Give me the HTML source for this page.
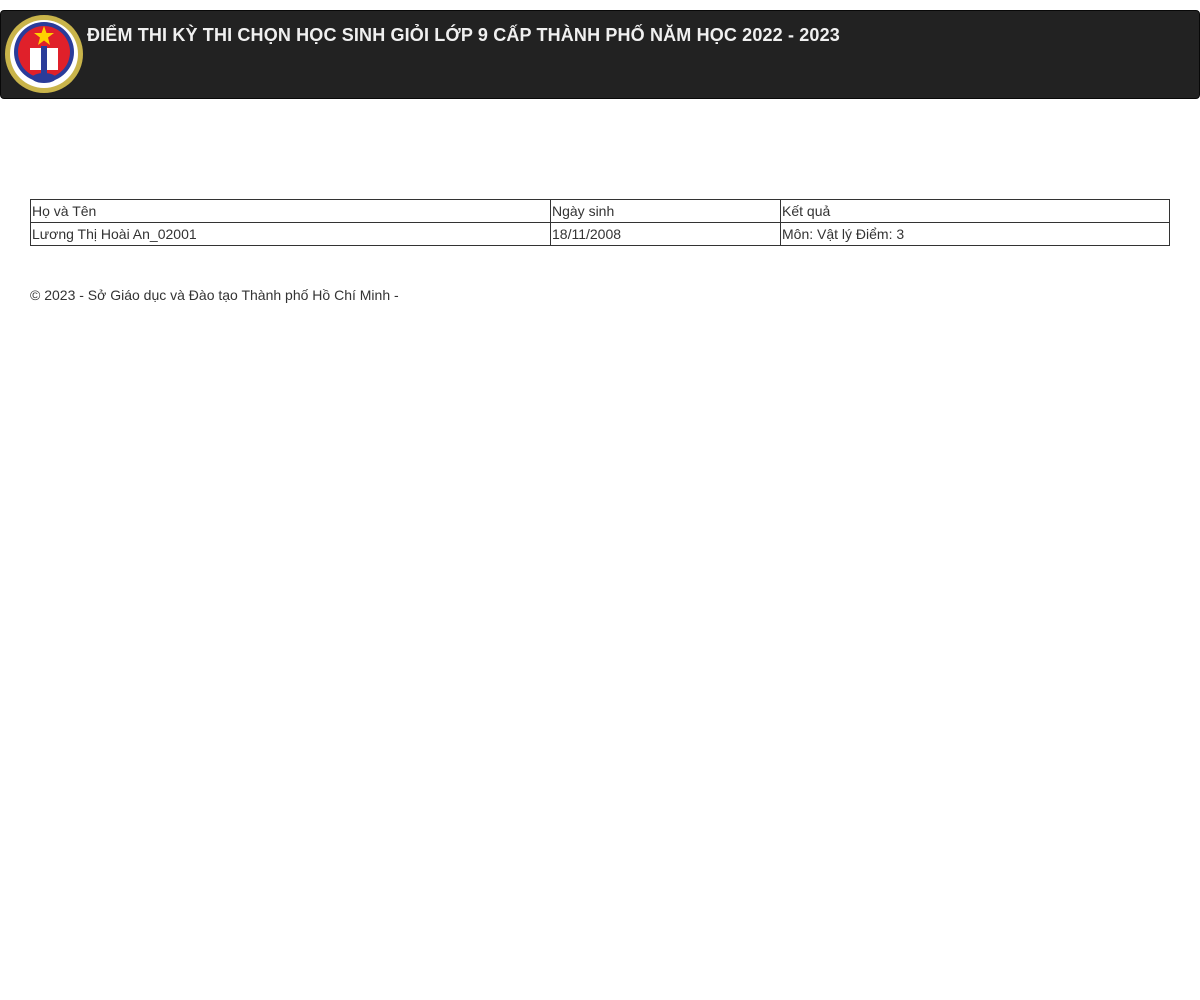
<!DOCTYPE html>
<html><head><meta charset="utf-8"><style>
body{margin:0;background:#fff;font-family:"Liberation Sans",Arial,sans-serif;color:#333;font-size:14px}
.hdr{position:absolute;left:0;top:10px;width:1198px;height:87px;background:#222;border:1px solid #080808;border-radius:4px}
.hdr h1{position:absolute;left:86px;top:14px;margin:0;font-size:18px;font-weight:bold;color:#f0f0f0;letter-spacing:0.15px}
.logo{position:absolute;left:3px;top:3px}
table{position:absolute;left:30px;top:199px;width:1140px;border-collapse:collapse}
td{border:1px solid #333;padding:0 1px;height:22px;line-height:22px;font-size:14px;vertical-align:middle}
.ft{position:absolute;left:30px;top:287px;font-size:14px}
</style></head><body>
<div class="hdr">
<svg class="logo" width="80" height="80" viewBox="0 0 80 80">
<circle cx="40" cy="40" r="39" fill="#c9b44a"/>
<circle cx="40" cy="40" r="34" fill="#fff"/>
<circle cx="40" cy="38" r="30" fill="#2a3c9a"/>
<circle cx="40" cy="38" r="26" fill="#e0202a"/>
<polygon points="40,12 42.5,19 50,19 44,23.5 46,31 40,26.5 34,31 36,23.5 30,19 37.5,19" fill="#ffd200"/>
<rect x="26" y="34" width="28" height="22" fill="#fff"/>
<rect x="37" y="32" width="6" height="30" fill="#2a3c9a"/>
<ellipse cx="40" cy="64" rx="12" ry="5" fill="#2a3c9a"/>
</svg>
<h1>ĐIỂM THI KỲ THI CHỌN HỌC SINH GIỎI LỚP 9 CẤP THÀNH PHỐ NĂM HỌC 2022 - 2023</h1>
</div>
<table>
<tr><td style="width:517px">Họ và Tên</td><td style="width:227px">Ngày sinh</td><td>Kết quả</td></tr>
<tr><td>Lương Thị Hoài An_02001</td><td>18/11/2008</td><td>Môn: Vật lý Điểm: 3</td></tr>
</table>
<div class="ft">© 2023 - Sở Giáo dục và Đào tạo Thành phố Hồ Chí Minh -</div>
</body></html>
